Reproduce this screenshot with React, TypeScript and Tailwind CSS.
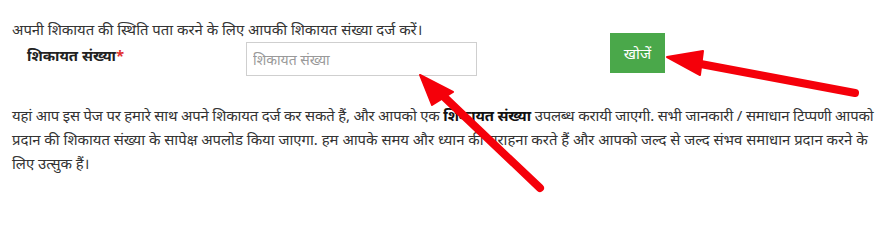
export default function App() {
  return (
    <div className="relative h-[232px] w-[881px] overflow-hidden bg-white font-['Noto_Sans',sans-serif] text-[14.9px] text-[#333]">
      <div className="px-3 pt-[17px]">
        <p className="leading-[24px]">
          अपनी शिकायत की स्थिति पता करने के लिए आपकी शिकायत संख्या दर्ज करें।
        </p>
        <div className="flex items-start">
          <label className="mt-[3px] w-[234px] pl-[15px] font-bold text-[#222]">
            शिकायत संख्या<span className="text-[#e03030]">*</span>
          </label>
          <input
            type="text"
            placeholder="शिकायत संख्या"
            className="mt-[1px] h-[34px] w-[231px] border border-[#cfcfcf] bg-white px-[6px] text-[14px] outline-none placeholder:text-[#999]"
          />
          <button className="ml-[133px] mt-[-8px] h-[40px] w-[55px] bg-[#4aa84a] text-[15px] text-white">
            खोजें
          </button>
        </div>
        <p className="mt-[27px] whitespace-nowrap leading-[24px]">
          <span className="tracking-[-0.17px]">
            यहां आप इस पेज पर हमारे साथ अपने शिकायत दर्ज कर सकते हैं, और आपको एक <b className="text-[#111]">शिकायत संख्या</b> उपलब्ध करायी जाएगी. सभी जानकारी / समाधान टिप्पणी आपको
          </span>
          <br />
          प्रदान की शिकायत संख्या के सापेक्ष अपलोड किया जाएगा. हम आपके समय और ध्यान की सराहना करते हैं और आपको जल्द से जल्द संभव समाधान प्रदान करने के
          <br />
          लिए उत्सुक हैं।
        </p>
      </div>
      <svg className="pointer-events-none absolute inset-0" width="881" height="232" viewBox="0 0 881 232">
        <g fill="#f5000a" stroke="#f5000a" strokeLinecap="round">
          <line x1="540" y1="188" x2="440" y2="93" strokeWidth="8" />
          <polygon points="420,75 453,92 432,105" strokeWidth="2" strokeLinejoin="round" />
          <line x1="855" y1="93" x2="690" y2="62" strokeWidth="8" />
          <polygon points="667,57 703,51 700,75" strokeWidth="2" strokeLinejoin="round" />
        </g>
      </svg>
    </div>
  );
}
